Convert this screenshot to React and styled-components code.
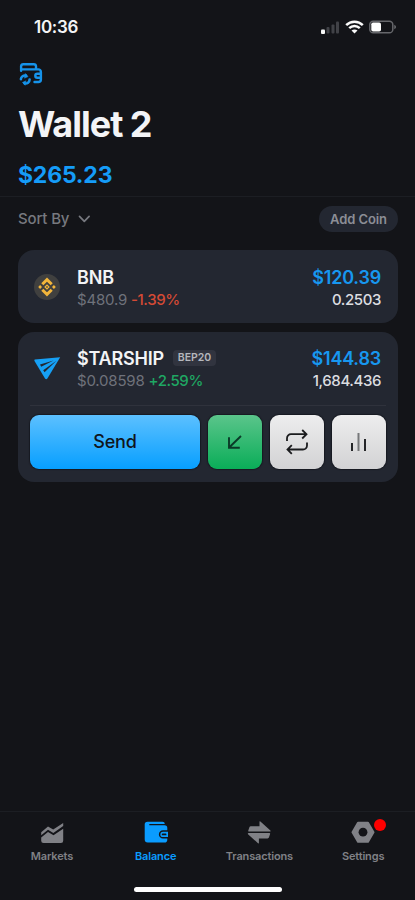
import React from 'react';
import styled, { createGlobalStyle } from 'styled-components';

const GlobalStyle = createGlobalStyle`
    *
    {
        box-sizing: border-box;
    }
    body
    {
        margin: 0;
        background: #131418;
        font-family: Inter, "Liberation Sans", sans-serif;
    }
    button
    {
        font-family: inherit;
        border: 0;
        padding: 0;
    }
    svg
    {
        flex: none;
    }
`;

const Screen = styled.div`
    display: flex;
    flex-direction: column;
    width: 100%;
    height: 900px;
    overflow: hidden;
    background: #131418;
    color: #f3f4f6;
`;

const Text = styled.span`
    display: block;
    white-space: nowrap;
    font-size: ${p => p.$size}px;
    line-height: ${p => p.$line}px;
    font-weight: ${p => p.$weight || 400};
    letter-spacing: ${p => p.$spacing || 0}px;
    color: ${p => p.$color || `inherit`};
`;

const StatusBar = styled.div`
    display: flex;
    justify-content: space-between;
    align-items: center;
    height: 54px;
    padding: 0 18px 0 34px;
`;

const StatusIcons = styled.div`
    display: flex;
    align-items: center;
    gap: 5px;
`;

const Header = styled.header`
    display: flex;
    flex-direction: column;
    align-items: flex-start;
    height: 143px;
    padding: 8px 18px 0;
    border-bottom: 1px solid #1c1e23;
`;

const WalletTitle = styled.h1`
    margin: 16px 0 14px;
    font-size: 36px;
    line-height: 44px;
    font-weight: 700;
    letter-spacing: -1px;
`;

const Toolbar = styled.div`
    display: flex;
    justify-content: space-between;
    align-items: center;
    height: 44px;
    padding: 0 17px 0 18px;
`;

const SortButton = styled.button`
    display: flex;
    align-items: center;
    gap: 9px;
    background: none;
    color: #77797f;
`;

const AddCoin = styled.button`
    display: flex;
    align-items: center;
    justify-content: center;
    width: 79px;
    height: 26px;
    border-radius: 13px;
    background: #232731;
    color: #8c8e96;
`;

const CoinList = styled.main`
    display: flex;
    flex-direction: column;
    flex-grow: 1;
    gap: 9px;
    padding: 9px 17px 0 18px;
`;

const Card = styled.section`
    border-radius: 16px;
    background: #232731;
`;

const CoinRow = styled.div`
    display: flex;
    align-items: center;
    height: 73px;
    padding: 0 17px 0 15px;
`;

const CoinIcon = styled.div`
    display: flex;
    width: 44px;
`;

const CoinInfo = styled.div`
    flex-grow: 1;
    padding-top: ${p => p.$shift}px;
`;

const CoinLine = styled.div`
    display: flex;
    align-items: center;
    gap: ${p => p.$gap || 0}px;
`;

const Amounts = styled.div`
    display: flex;
    flex-direction: column;
    align-items: flex-end;
    padding-top: ${p => p.$shift}px;
`;

const Tag = styled.span`
    display: flex;
    align-items: center;
    justify-content: center;
    width: 43px;
    height: 16px;
    border-radius: 4px;
    background: #31343f;
`;

const Actions = styled.div`
    display: flex;
    gap: 8px;
    margin: 0 12px;
    padding: 9px 0 13px;
    border-top: 1px solid #2f323c;
`;

const fills = {
    blue: `linear-gradient(#5cc0ff, #079fff)`,
    green: `linear-gradient(#5bc58b, #0aad58)`,
    light: `linear-gradient(#ededee, #d2d2d4)`,
};

const ActionButton = styled.button`
    display: flex;
    align-items: center;
    justify-content: center;
    flex: ${p => p.$wide ? `1` : `0 0 54px`};
    height: 54px;
    border-radius: 9px;
    background: ${p => fills[p.$fill]};
    box-shadow: 0 0 1px 1px #171a22;
    color: #10151c;
`;

const TabBar = styled.nav`
    display: grid;
    grid-template-columns: repeat(4, 1fr);
    height: 76px;
    border-top: 1px solid #1c1e23;
`;

const Tab = styled.div`
    display: flex;
    flex-direction: column;
    align-items: center;
    gap: 4px;
    padding-top: 8px;
    color: ${p => p.$active ? `#0a9cff` : `#808186`};
`;

const TabIcon = styled.div`
    display: flex;
    position: relative;
`;

const Badge = styled.span`
    position: absolute;
    top: -1px;
    right: -10px;
    width: 12px;
    height: 12px;
    border-radius: 50%;
    background: #fe0000;
`;

const HomeIndicator = styled.div`
    flex: none;
    width: 148px;
    height: 5px;
    margin: 0 auto 8px;
    border-radius: 3px;
    background: #ffffff;
`;

const Signal = () => (
    <svg width="19" height="14" viewBox="0 0 19 14">
        <rect x="0" y="9.5" width="4" height="4.5" rx="1" fill="#f7f7f7" />
        <rect x="5.5" y="7" width="3" height="6.5" rx="1" fill="#414247" />
        <rect x="10.5" y="4.5" width="3" height="9" rx="1" fill="#414247" />
        <rect x="15" y="1.5" width="3" height="12" rx="1" fill="#414247" />
    </svg>
);

const Wifi = () => (
    <svg width="19" height="14" viewBox="0 0 19 14" fill="none" stroke="#fafafa" strokeWidth="2.5">
        <path d="M1.2 5.2C5.8.6 13.2.6 17.8 5.2" />
        <path d="M4.2 8.2c3-2.9 7.6-2.9 10.6 0" />
        <path d="M6.5 10.6c1.7-1.6 4.3-1.6 6 0l-3 3z" fill="#fafafa" stroke="none" />
    </svg>
);

const Battery = () => (
    <svg width="28" height="14" viewBox="0 0 28 14">
        <rect x=".8" y="1.2" width="23" height="11.6" rx="3.4" fill="none" stroke="#66676b" strokeWidth="1.5" />
        <rect x="2.3" y="2.5" width="9.7" height="9" rx="1.8" fill="#ffffff" />
        <path d="M25.4 4.8c2 .8 2 3.6 0 4.4z" fill="#77787c" />
    </svg>
);

const WalletSwitch = () => (
    <svg width="25" height="24" viewBox="0 0 25 24" fill="none" stroke="#1693ea" strokeWidth="2.4" strokeLinecap="round" strokeLinejoin="round">
        <path d="M3.1 8.8V4.2A2.2 2.2 0 0 1 5.3 2.2h10.5a2.2 2.2 0 0 1 2.2 2V6.8" />
        <path d="M3.3 7.4h17a2.6 2.6 0 0 1 2.6 2.6v7.4a2.6 2.6 0 0 1-2.6 2.6h-3.8" />
        <path d="M22.5 11.8h-3.2a2 2 0 0 0 0 4h3.2" />
        <path d="M2.9 17.2a4 4 0 0 1 5-3.6M11.6 17.6a4 4 0 0 1-5 3.8" strokeWidth="2.6" />
        <path d="M7.6 11.8l2.4 2.8-3.2 1.4zM6.9 23l-2.4-2.6 3.2-1.4z" fill="#1693ea" strokeWidth=".6" />
    </svg>
);

const Chevron = () => (
    <svg width="13" height="8" viewBox="0 0 13 8" fill="none" stroke="currentColor" strokeWidth="1.7" strokeLinecap="round" strokeLinejoin="round">
        <path d="M1.5 1.3l4.8 5 4.8-5" />
    </svg>
);

const BnbLogo = () => (
    <svg width="28" height="28" viewBox="0 0 28 28">
        <circle cx="14" cy="14" r="13" fill="#40403f" />
        <g fill="none" stroke="#f3b63b" strokeWidth="2.9">
            <path d="M9.3 11.3L14 6.6l4.7 4.7M9.3 16.7l4.7 4.7 4.7-4.7" />
        </g>
        <path d="M14 11.2l2.8 2.8-2.8 2.8-2.8-2.8zM7.1 12.1L9 14l-1.9 1.9L5.2 14zM20.9 12.1l1.9 1.9-1.9 1.9L19 14z" fill="#f3b63b" />
        <path d="M14 12.9l1.1 1.1-1.1 1.1-1.1-1.1z" fill="#40403f" />
    </svg>
);

const StarshipLogo = () => (
    <svg width="28" height="25" viewBox="0 0 28 25">
        <path d="M1.8 3.6L27.2 1.2 14.4 22.4Q13.2 24 12 22.4L1.5 5Q1 3.8 1.8 3.6z" fill="#16a0f5" />
        <path d="M7 8.5L20.5 4.4 8.2 10.8zM10.2 14.2L23.4 4.8 11.6 16.2z" fill="#232731" />
    </svg>
);

const ReceiveIcon = () => (
    <svg width="16" height="16" viewBox="0 0 16 16" fill="none" stroke="#0a3b28" strokeWidth="1.9">
        <path d="M14 2L2.4 13.3M2 3.2v10.5h10.8" />
    </svg>
);

const SwapIcon = () => (
    <svg width="24" height="26" viewBox="0 0 24 26" fill="none" stroke="#1b1c1e" strokeWidth="1.8">
        <path d="M2 12V9.2a4 4 0 0 1 4-4h15.5M17.2 1l4.3 4.2-4.3 4.3" />
        <path d="M22 13.5v3a4 4 0 0 1-4 4H2.5M6.8 16.2l-4.3 4.3 4.3 4.3" />
    </svg>
);

const ChartIcon = () => (
    <svg width="18" height="22" viewBox="0 0 18 22">
        <rect x="1" y="12" width="2" height="8" fill="#252629" />
        <rect x="7.5" y="2" width="2" height="18" fill="#77787a" />
        <rect x="14" y="8" width="2" height="12" fill="#252629" />
    </svg>
);

const MarketsIcon = () => (
    <svg width="26" height="25" viewBox="0 0 26 25" fill="currentColor">
        <path d="M2.2 12.2L9 6.5l5.2 3L24.2 3v3.1L14.3 13 9 9.8l-6.8 5.5z" />
        <path d="M2.2 17.4L9 12l5.5 3.2 9.7-6.5v12a2.3 2.3 0 0 1-2.3 2.3H4.5a2.3 2.3 0 0 1-2.3-2.3z" />
    </svg>
);

const BalanceIcon = () => (
    <svg width="26" height="25" viewBox="0 0 26 25">
        <path d="M4.5 1.7h15A2.3 2.3 0 0 1 21.8 4H6.3v1.2h15.2a2.8 2.8 0 0 1 2.8 2.8v11.7a2.8 2.8 0 0 1-2.8 2.8H4.7a3 3 0 0 1-3-3V4.5a2.8 2.8 0 0 1 2.8-2.8z" fill="currentColor" />
        <path d="M25 11h-5a3.4 3.4 0 0 0 0 6.8h5" fill="currentColor" stroke="#131418" strokeWidth="1.5" />
        <path d="M19.6 14.4h3" stroke="#131418" strokeWidth="1.7" strokeLinecap="round" />
    </svg>
);

const TransactionsIcon = () => (
    <svg width="26" height="25" viewBox="0 0 26 25" fill="currentColor">
        <path d="M3 11.6Q2 11.6 2.3 10.6L3.5 7Q3.8 6.2 4.8 6.2H13.5V1.6Q13.7.8 14.4 1.4L24.4 10.4Q25 11.6 23.8 11.6z" />
        <path d="M23.4 12.9Q24.4 12.9 24.1 13.9L22.9 17.6Q22.6 18.4 21.6 18.4H12.9V23Q12.7 23.8 12 23.2L2 14.2Q1.4 12.9 2.6 12.9z" />
    </svg>
);

const SettingsIcon = () => (
    <svg width="26" height="25" viewBox="0 0 26 25">
        <path d="M8 2.7h10L23.5 12.2 18 21.8H8L2.5 12.2z" fill="currentColor" stroke="currentColor" strokeWidth="2" strokeLinejoin="round" />
        <circle cx="13" cy="12.2" r="4.4" fill="#131418" />
    </svg>
);

const coins = [
    {
        name: `BNB`,
        icon: <BnbLogo />,
        price: `$480.9`,
        change: `-1.39%`,
        up: false,
        value: `$120.39`,
        amount: `0.2503`,
    },
    {
        name: `$TARSHIP`,
        tag: `BEP20`,
        icon: <StarshipLogo />,
        price: `$0.08598`,
        change: `+2.59%`,
        up: true,
        value: `$144.83`,
        amount: `1,684.436`,
        open: true,
    },
];

const tabs = [
    { label: `Markets`, icon: <MarketsIcon /> },
    { label: `Balance`, icon: <BalanceIcon />, active: true },
    { label: `Transactions`, icon: <TransactionsIcon /> },
    { label: `Settings`, icon: <SettingsIcon />, badge: true },
];

const CoinCard = ({ coin }) =>
{
    const shift = coin.open ? 1 : 3;
    return (
        <Card>
            <CoinRow>
                <CoinIcon>{coin.icon}</CoinIcon>
                <CoinInfo $shift={shift}>
                    <CoinLine $gap={9}>
                        <Text $size={18} $line={23} $weight={600} $spacing={-0.2}>{coin.name}</Text>
                        {coin.tag &&
                            <Tag>
                                <Text $size={10.5} $line={16} $weight={600} $color={`#b5b7bd`}>{coin.tag}</Text>
                            </Tag>
                        }
                    </CoinLine>
                    <CoinLine $gap={4}>
                        <Text $size={15} $line={22} $spacing={-0.2} $color={`#6f727b`}>{coin.price}</Text>
                        <Text $size={15} $line={22} $weight={500} $spacing={-0.4} $color={coin.up ? `#1fa763` : `#d44a35`}>{coin.change}</Text>
                    </CoinLine>
                </CoinInfo>
                <Amounts $shift={shift}>
                    <Text $size={18} $line={23} $weight={600} $spacing={-0.2} $color={`#1797f0`}>{coin.value}</Text>
                    <Text $size={15} $line={22} $weight={500} $spacing={-0.4} $color={`#dcdde0`}>{coin.amount}</Text>
                </Amounts>
            </CoinRow>
            {coin.open &&
                <Actions>
                    <ActionButton $wide $fill={`blue`}>
                        <Text $size={18} $line={24} $weight={500} $spacing={-0.2}>Send</Text>
                    </ActionButton>
                    <ActionButton $fill={`green`}><ReceiveIcon /></ActionButton>
                    <ActionButton $fill={`light`}><SwapIcon /></ActionButton>
                    <ActionButton $fill={`light`}><ChartIcon /></ActionButton>
                </Actions>
            }
        </Card>
    );
};

const App = () =>
{
    return (
        <Screen>
            <GlobalStyle />
            <StatusBar>
                <Text $size={17} $line={22} $weight={600} $spacing={-0.3}>10:36</Text>
                <StatusIcons>
                    <Signal />
                    <Wifi />
                    <Battery />
                </StatusIcons>
            </StatusBar>
            <Header>
                <WalletSwitch />
                <WalletTitle>Wallet 2</WalletTitle>
                <Text $size={23} $line={30} $weight={700} $spacing={-0.2} $color={`#159cf8`}>$265.23</Text>
            </Header>
            <Toolbar>
                <SortButton>
                    <Text $size={15} $line={20} $weight={500} $spacing={-0.15}>Sort By</Text>
                    <Chevron />
                </SortButton>
                <AddCoin>
                    <Text $size={13} $line={18} $weight={600} $spacing={-0.1}>Add Coin</Text>
                </AddCoin>
            </Toolbar>
            <CoinList>
                {coins.map(coin => <CoinCard key={coin.name} coin={coin} />)}
            </CoinList>
            <TabBar>
                {tabs.map(tab => (
                    <Tab key={tab.label} $active={tab.active}>
                        <TabIcon>
                            {tab.icon}
                            {tab.badge && <Badge />}
                        </TabIcon>
                        <Text $size={11} $line={14} $weight={600} $spacing={-0.15}>{tab.label}</Text>
                    </Tab>
                ))}
            </TabBar>
            <HomeIndicator />
        </Screen>
    );
};

export default App;
